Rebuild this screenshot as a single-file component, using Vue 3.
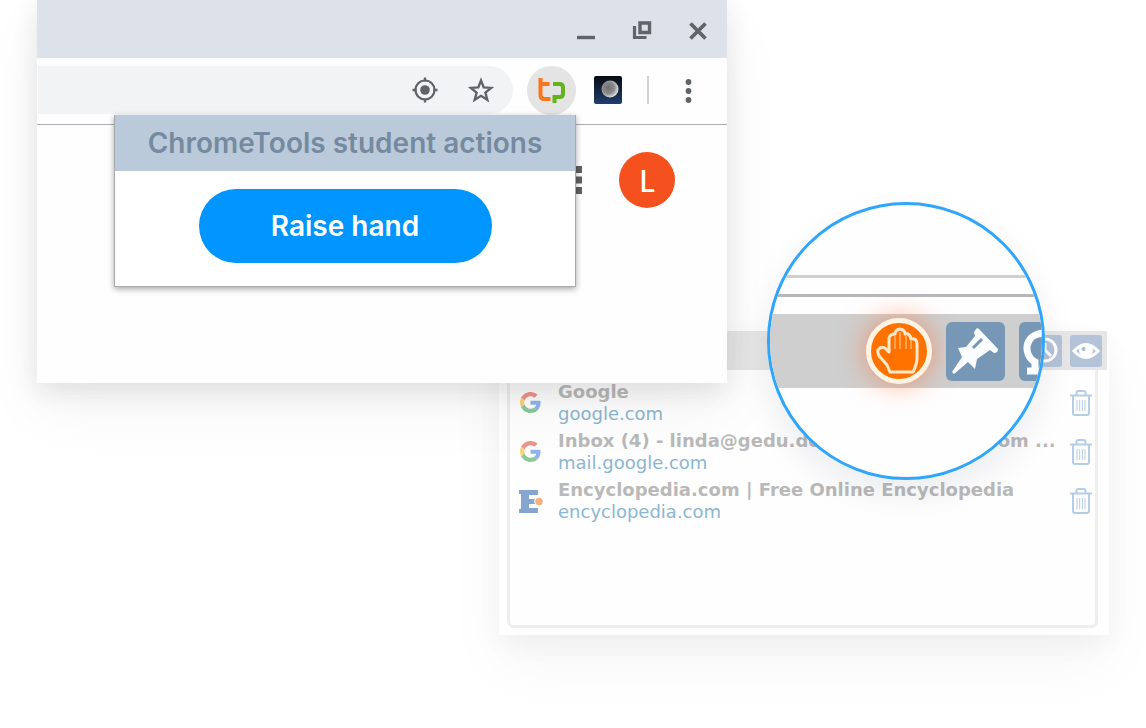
<template>
  <main class="scene">
    <section class="browser">
      <header class="titlebar">
        <button class="icon-btn" aria-label="Minimize">
          <svg viewBox="0 0 28 28"><path d="M5 22.500h18" stroke-width="3.400" /></svg>
        </button>
        <button class="icon-btn" aria-label="Restore">
          <svg viewBox="0 0 28 28">
            <path d="M12 8h9.500v9.500h-9.500z" stroke-width="3.400" />
            <path d="M6.500 11v11.500h12" stroke-width="3.200" />
          </svg>
        </button>
        <button class="icon-btn" aria-label="Close">
          <svg viewBox="0 0 28 28"><path d="M6.500 8.500l15 15M21.500 8.500l-15 15" stroke-width="3.800" /></svg>
        </button>
      </header>

      <div class="toolbar">
        <div class="omnibox">
          <button class="icon-btn" aria-label="Location">
            <svg viewBox="0 0 28 28">
              <circle cx="14" cy="14" r="9.500" stroke-width="2.200" />
              <circle cx="14" cy="14" r="4.800" class="solid" />
              <path d="M14 1.500v4M14 22.500v4M1.500 14h4M22.500 14h4" stroke-width="2.400" />
            </svg>
          </button>
          <button class="icon-btn" aria-label="Bookmark">
            <svg viewBox="0 0 28 28">
              <path
                d="M14 4.500l2.700 6.900 7.400.5-5.700 4.700 1.900 7.200-6.300-4-6.300 4 1.900-7.200-5.700-4.700 7.400-.5z"
                stroke-width="2.400"
              />
            </svg>
          </button>
        </div>
        <button class="extension" aria-label="ChromeTools">
          <svg viewBox="0 0 49 49">
            <path d="M13.500 12v17q0 4 4 4h6M13.500 18h9" class="tp-t" />
            <path d="M26 18h6.500q3.500 0 3.500 3.500v6q0 3.500-3.500 3.500h-5v6" class="tp-p" />
          </svg>
        </button>
        <button class="moon" aria-label="Dark mode">
          <svg viewBox="0 0 28 28">
            <defs>
              <linearGradient id="night" x1="0" y1="0" x2="0" y2="1">
                <stop offset="0" stop-color="#080b14" />
                <stop offset="1" stop-color="#1f3e6d" />
              </linearGradient>
              <radialGradient id="lunar" cx=".4" cy=".42" r=".6">
                <stop offset="0" stop-color="#6f6f6f" />
                <stop offset=".6" stop-color="#8c8c8c" />
                <stop offset="1" stop-color="#e2e2e2" />
              </radialGradient>
            </defs>
            <rect width="28" height="28" rx="2" fill="url(#night)" />
            <circle cx="16" cy="13" r="8.500" fill="url(#lunar)" />
          </svg>
        </button>
        <span class="divider" />
        <button class="icon-btn" aria-label="Menu">
          <svg viewBox="0 0 28 28">
            <circle cx="14.500" cy="6" r="2.900" class="solid" />
            <circle cx="14.500" cy="15" r="2.900" class="solid" />
            <circle cx="14.500" cy="24" r="2.900" class="solid" />
          </svg>
        </button>
      </div>

      <div class="page">
        <button class="apps" aria-label="Apps">
          <svg viewBox="0 0 28 28">
            <template v-for="row in 3" :key="row">
              <rect
                v-for="col in 3"
                :key="col"
                :x="(col - 1) * 10.5"
                :y="(row - 1) * 10.5"
                width="7"
                height="7"
              />
            </template>
          </svg>
        </button>
        <button class="avatar">L</button>
      </div>

      <div class="popup">
        <h1 class="popup-title">ChromeTools student actions</h1>
        <button class="raise">Raise hand</button>
      </div>
    </section>

    <section class="session">
      <header class="session-bar">
        <button class="tile" aria-label="History">
          <svg viewBox="0 0 32 32">
            <circle cx="15" cy="15" r="11" />
            <path d="M15 8v7l6 6" />
          </svg>
        </button>
        <button class="tile" aria-label="View">
          <svg viewBox="0 0 32 32">
            <path d="M4 16q12-13 24 0q-12 13-24 0z" />
            <circle cx="16" cy="15.500" r="5.500" class="pupil" />
            <circle cx="13.500" cy="14" r="2" class="glint" />
          </svg>
        </button>
      </header>

      <ul class="tabs">
        <li v-for="tab in tabs" :key="tab.url" class="tab">
          <svg v-if="tab.icon === 'google'" class="favicon" viewBox="0 0 48 48">
            <path fill="#f0938b" d="M24 9.500c3.540 0 6.710 1.220 9.210 3.600l6.850-6.850C35.900 2.380 30.470 0 24 0 14.620 0 6.510 5.380 2.560 13.220l7.980 6.190C12.430 13.720 17.740 9.500 24 9.500z" />
            <path fill="#8fb5f0" d="M46.980 24.550c0-1.570-.15-3.090-.38-4.550H24v9.020h12.940c-.58 2.960-2.260 5.480-4.780 7.180l7.730 6c4.510-4.180 7.090-10.360 7.090-17.650z" />
            <path fill="#f8d57a" d="M10.530 28.590A14.500 14.500 0 0 1 9.770 24c0-1.600.27-3.140.76-4.590l-7.980-6.190A23.900 23.900 0 0 0 0 24c0 3.880.92 7.540 2.560 10.780z" />
            <path fill="#8cc99b" d="M24 48c6.480 0 11.930-2.130 15.890-5.810l-7.730-6c-2.150 1.450-4.920 2.300-8.160 2.300-6.260 0-11.570-4.220-13.470-9.910l-7.980 6.190C6.510 42.620 14.620 48 24 48z" />
          </svg>
          <svg v-else class="favicon wide" viewBox="0 0 24 24">
            <path fill="#85a6ce" d="M0 1h19v5H10v4h6v5h-6v4h9v5H0v-4h2V5H0z" />
            <circle cx="20" cy="12.500" r="4.800" fill="#fff" />
            <circle cx="20" cy="12.500" r="3.800" fill="#f6b27e" />
          </svg>
          <div class="tab-text">
            <strong class="tab-title">{{ tab.title }}</strong>
            <a class="tab-url" :href="'#' + tab.url">{{ tab.url }}</a>
          </div>
          <button class="trash" :aria-label="'Close ' + tab.url">
            <svg viewBox="0 0 22 26">
              <path d="M0 5.500h22M6.500 5V3q0-2 2-2h5q2 0 2 2v2M3 6v17q0 2 2 2h12q2 0 2-2V6" />
              <path d="M7 10v11M9.700 10v11M12.400 10v11M15 10v11" class="ribs" />
            </svg>
          </button>
        </li>
      </ul>

      <div class="lens">
        <div class="lens-field">
          <div class="lens-bar">
            <button class="hand" aria-label="Raised hand">
              <svg viewBox="0 0 66 66">
                <path
                  d="M24 54l-3-7-7-8q-3-4-2-7 3-4 7-2l4 4V20q1-4 6-4 0-4 5-5 5 1 5 5 5-1 6 5 5-1 6 4v15q0 6-4 14z"
                  class="palm"
                />
                <path d="M29 18v13M34 14v17M40 18v13M45 22v9" class="fingers" />
              </svg>
            </button>
            <button class="lens-tile" aria-label="Pin">
              <svg viewBox="0 0 59 59">
                <path d="M31 6l-3 4 1 4-9 11-8 1 4 9L6 50l2 2 14-12 7 7 2-10 13-9 4 3q4 0 4-4L33 7z" />
                <path d="M27 26l9-9" class="slot" />
              </svg>
            </button>
            <button class="lens-tile" aria-label="Session history">
              <svg viewBox="0 0 59 59">
                <path d="M26 11C4 11 4 34 16 40v9M8 49h12" class="loop" />
              </svg>
            </button>
          </div>
        </div>
      </div>
    </section>
  </main>
</template>

<script setup>
const tabs = [
  { icon: 'google', title: 'Google', url: 'google.com' },
  {
    icon: 'google',
    title: 'Inbox (4) - linda@gedu.demo.hapara-mail.com ...',
    url: 'mail.google.com'
  },
  {
    icon: 'encyclopedia',
    title: 'Encyclopedia.com | Free Online Encyclopedia',
    url: 'encyclopedia.com'
  }
]
</script>

<style>
body {
  margin: 0;
  background: #fff;
}
</style>

<style scoped>
.scene {
  display: grid;
  grid-template-columns: 37px 462px minmax(228px, 1fr) 382px 37px;
  grid-template-rows: 331px 52px auto;
  padding-bottom: 93px;
  overflow: hidden;
  font-family: Inter, 'Noto Sans', sans-serif;
}

button {
  display: block;
  flex: none;
  margin: 0;
  padding: 0;
  border: 0;
  background: none;
  font: inherit;
  cursor: pointer;
}

svg {
  display: block;
  width: 100%;
  height: 100%;
}

.browser {
  grid-column: 2 / 4;
  grid-row: 1 / 3;
  position: relative;
  z-index: 1;
  background: #fefefe;
  box-shadow: 0 26px 60px rgba(0, 0, 0, 0.05), 0 8px 24px rgba(30, 30, 50, 0.1);
}

.titlebar {
  display: flex;
  justify-content: flex-end;
  align-items: center;
  gap: 28px;
  height: 58px;
  padding-right: 15px;
  box-sizing: border-box;
  background: #dde1e9;
}

.icon-btn {
  width: 28px;
  height: 28px;
}

.icon-btn svg {
  fill: none;
  stroke: #606367;
}

.icon-btn .solid {
  fill: #606367;
  stroke: none;
}

.toolbar {
  display: flex;
  align-items: center;
  height: 67px;
  padding: 0 25px 2px 1px;
  box-sizing: border-box;
  border-bottom: 1px solid #acacb0;
}

.omnibox {
  display: flex;
  flex: 1;
  justify-content: flex-end;
  align-items: center;
  gap: 28px;
  height: 48px;
  padding-right: 18px;
  border-radius: 0 24px 24px 0;
  background: #f1f3f4;
}

.extension {
  width: 49px;
  height: 49px;
  margin: 0 18px 0 14px;
  border-radius: 50%;
  background: #e4e4e4;
}

.extension path {
  fill: none;
  stroke-width: 4;
}

.extension .tp-t {
  stroke: #f9761c;
}

.extension .tp-p {
  stroke: #63b31a;
}

.moon {
  width: 28px;
  height: 28px;
}

.divider {
  width: 2px;
  height: 28px;
  margin: 0 25px;
  background: #d2d2d4;
}

.page {
  display: flex;
  justify-content: flex-end;
  align-items: center;
  gap: 37px;
  padding: 27px 52px 0 0;
}

.apps {
  width: 28px;
  height: 28px;
}

.apps rect {
  fill: #606060;
}

.avatar {
  width: 56px;
  height: 56px;
  border-radius: 50%;
  background: #f4511e;
  color: #fff;
  font: 500 30px Lato, sans-serif;
}

.popup {
  position: absolute;
  top: 115px;
  right: 151px;
  width: 460px;
  border: 1px solid #a9a9ab;
  border-top-width: 0;
  background: #fff;
  box-shadow: 0 2px 6px rgba(0, 0, 0, 0.35);
  padding-bottom: 23px;
}

.popup-title {
  margin: 0 0 18px;
  background: #bbcadb;
  color: #768a9f;
  font-size: 28px;
  font-weight: 600;
  line-height: 56px;
  text-align: center;
}

.raise {
  width: 293px;
  height: 74px;
  margin: 0 auto;
  border-radius: 37px;
  background: #0095ff;
  color: #fff;
  font-size: 28px;
  font-weight: 600;
}

.session {
  grid-column: 3 / 5;
  grid-row: 2 / 4;
  position: relative;
  padding-bottom: 7px;
  background: #fefefe;
  box-shadow: 0 30px 60px rgba(0, 0, 0, 0.04), 0 10px 24px rgba(0, 0, 0, 0.04);
}

.session-bar {
  display: flex;
  justify-content: flex-end;
  align-items: center;
  gap: 8px;
  height: 39px;
  margin-right: 2px;
  padding-right: 5px;
  background: #e6e6e6;
}

.tile {
  width: 32px;
  height: 32px;
  border-radius: 3px;
  background: #b4c3d7;
}

.tile svg {
  fill: none;
  stroke: #fff;
  stroke-width: 3;
}

.tile .pupil {
  fill: #fff;
}

.tile .glint {
  fill: #a9bad2;
  stroke: none;
}

.tabs {
  min-height: 258px;
  margin: 0 11px 0 8px;
  padding: 8px 3px 0 9px;
  box-sizing: border-box;
  border: 3px solid #eee;
  border-top: 0;
  border-radius: 0 0 7px 7px;
  list-style: none;
}

.tab {
  display: flex;
  align-items: center;
  height: 49px;
}

.favicon {
  flex: none;
  width: 21px;
  height: 21px;
  margin: 0 17px 0 1px;
}

.favicon.wide {
  width: 24px;
  height: 24px;
  margin: 0 15px 0 0;
}

.tab-text {
  flex: 1;
  min-width: 0;
  font-family: 'DejaVu Sans', Verdana, sans-serif;
  font-size: 18px;
  line-height: 22px;
  white-space: nowrap;
}

.tab-title {
  display: block;
  color: #b9b9b9;
}

.tab-url {
  display: block;
  color: #8ab6d1;
  text-decoration: none;
}

.trash {
  width: 22px;
  height: 26px;
}

.trash path {
  fill: none;
  stroke: #b5cde6;
  stroke-width: 2;
}

.trash .ribs {
  stroke-width: 1;
}

.lens {
  position: absolute;
  top: -129px;
  right: 64px;
  width: 278px;
  height: 278px;
  box-sizing: border-box;
  border: 3px solid #2fa5fb;
  border-radius: 50%;
  background: #fefefe;
  box-shadow: 0 14px 36px rgba(0, 30, 60, 0.08);
  overflow: hidden;
}

.lens-field {
  margin-top: 70px;
  padding-top: 16px;
  border-top: 3px solid #d0d0d0;
}

.lens-field::before {
  content: '';
  display: block;
  height: 3px;
  margin-bottom: 17px;
  background: #b7b7b9;
}

.lens-bar {
  display: flex;
  align-items: center;
  gap: 14px;
  height: 74px;
  padding-left: 96px;
  background: #cfcfcf;
}

.hand {
  width: 66px;
  height: 66px;
  box-sizing: border-box;
  border-radius: 50%;
  border: 5px solid #fff3e4;
  background: #ff7200;
  box-shadow: 0 0 28px rgba(255, 90, 20, 0.5);
}

.hand svg {
  width: 66px;
  height: 66px;
  margin: -5px;
}

.hand path {
  fill: none;
  stroke: #ffe9c9;
  stroke-width: 3;
  stroke-linejoin: round;
}

.hand .fingers {
  stroke: #ffa04f;
  stroke-width: 2;
}

.lens-tile {
  width: 59px;
  height: 59px;
  border-radius: 6px;
  background: #7797b7;
}

.lens-tile path {
  fill: #fafdff;
}

.lens-tile .slot {
  stroke: #7797b7;
  stroke-width: 3;
}

.lens-tile .loop {
  fill: none;
  stroke: #fafdff;
  stroke-width: 7;
}
</style>
